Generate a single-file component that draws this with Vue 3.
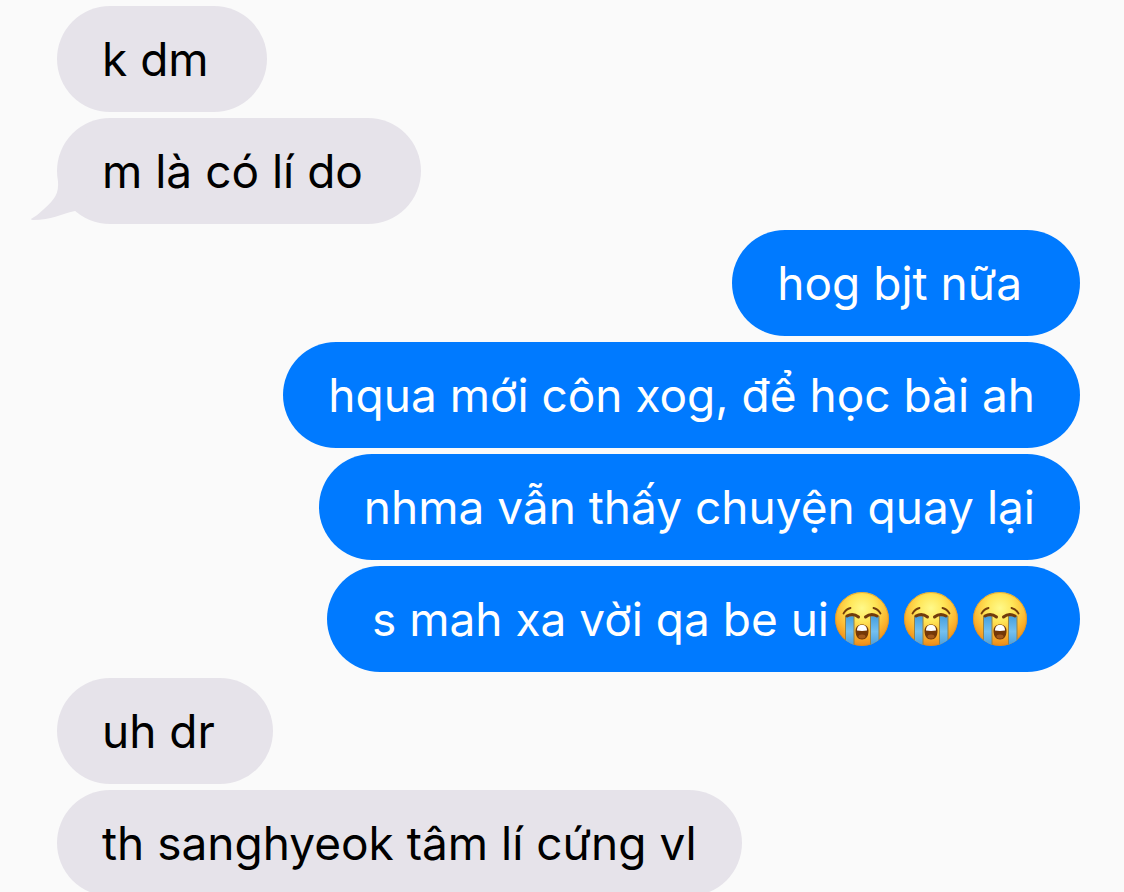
<script setup>
const messages = [
  { from: 'them', text: 'k dm ' },
  { from: 'them', text: 'm là có lí do ', tail: true },
  { from: 'me', text: 'hog bjt nữa ' },
  { from: 'me', text: 'hqua mới côn xog, để học bài ah' },
  { from: 'me', text: 'nhma vẫn thấy chuyện quay lại' },
  { from: 'me', text: 's mah xa vời qa be ui', sobs: 3 },
  { from: 'them', text: 'uh dr ' },
  { from: 'them', text: 'th sanghyeok tâm lí cứng vl' },
]
</script>

<template>
  <main class="chat">
    <svg class="defs" aria-hidden="true">
      <defs>
        <radialGradient id="face" cx="50%" cy="30%" r="70%">
          <stop offset="0" stop-color="#fff98a" />
          <stop offset="0.35" stop-color="#ffe658" />
          <stop offset="0.7" stop-color="#fcb62f" />
          <stop offset="1" stop-color="#ee8a18" />
        </radialGradient>
        <linearGradient id="tear" x1="0" y1="0" x2="0" y2="1">
          <stop offset="0" stop-color="#459fdf" />
          <stop offset="0.5" stop-color="#74c0f0" />
          <stop offset="1" stop-color="#4499da" />
        </linearGradient>
        <clipPath id="disc"><circle cx="27" cy="27" r="27" /></clipPath>
        <symbol id="sob" viewBox="0 0 54 54">
          <g clip-path="url(#disc)">
            <rect width="54" height="54" fill="url(#face)" />
            <circle cx="27" cy="27" r="26.5" fill="none" stroke="#d98a1c" stroke-opacity="0.6" />
            <path d="M10.5 24H19V55H10.5Z" fill="url(#tear)" stroke="#94834a" />
            <path d="M35.500 24H44V55H35.500Z" fill="url(#tear)" stroke="#94834a" />
          </g>
          <g fill="none" stroke="#713b0c" stroke-linecap="round">
            <path d="M8.500 21.500Q11 17 15.500 16" stroke-width="1.800" />
            <path d="M45.500 21.500Q43 17 38.500 16" stroke-width="1.800" />
            <path d="M12 24Q18 20.500 23.500 25" stroke-width="3" />
            <path d="M42 24Q36 20.500 30.500 25" stroke-width="3" />
          </g>
          <path d="M27 32.500C31 32.500 33.500 35 33.500 39C33.500 44 31 47.500 27 47.500S20.500 44 20.500 39C20.500 35 23 32.500 27 32.500Z" fill="#743807" />
          <path d="M27 33C30.500 33 32 35 32 38.500C29 39 25 39 22 38.500C22 35 23.500 33 27 33Z" fill="#fff" />
          <ellipse cx="27" cy="44.500" rx="3.500" ry="2" fill="#a3591b" />
        </symbol>
      </defs>
    </svg>

    <ol class="thread">
      <li v-for="(m, i) in messages" :key="i" class="bubble" :class="m.from">
        <svg v-if="m.tail" class="tail" viewBox="0 0 60 44" aria-hidden="true">
          <path d="M28 0C29 14 25 19 14 29Q8 35 1 39Q1 40 3 40C22 40 30 34 45 31L60 12V0Z" />
        </svg>
        <span class="text">{{ m.text }}</span>
        <span v-if="m.sobs" class="emojis" role="img" aria-label="loudly crying face, three times">
          <svg v-for="n in m.sobs" :key="n" class="emoji"><use href="#sob" /></svg>
        </span>
      </li>
    </ol>
  </main>
</template>

<style>
body {
  margin: 0;
  background: #fafafa;
}
</style>

<style scoped>
.chat {
  box-sizing: border-box;
  height: 100vh;
  overflow: hidden;
  padding: 6px 44px 0 57px;
  background: #fafafa;
  font-family: Inter, "Noto Sans", sans-serif;
}
.defs {
  position: absolute;
  width: 0;
  height: 0;
}
.thread {
  display: flex;
  flex-direction: column;
  gap: 6px;
  margin: 0;
  padding: 0;
  list-style: none;
}
.bubble {
  position: relative;
  display: flex;
  align-items: center;
  flex: none;
  padding: 23px 45px;
  border-radius: 53px;
  font-size: 46px;
  line-height: 60px;
}
.them {
  align-self: flex-start;
  background: #e6e3ea;
  color: #000;
}
.me {
  align-self: flex-end;
  background: #007aff;
  color: #fff;
}
.text {
  position: relative;
  white-space: pre-wrap;
}
.tail {
  position: absolute;
  left: -27px;
  bottom: 0;
  width: 60px;
  height: 44px;
  fill: #e6e3ea;
}
.emojis {
  display: flex;
  gap: 15px;
  padding: 0 8px 0 6px;
}
.emoji {
  width: 54px;
  height: 54px;
}
</style>
